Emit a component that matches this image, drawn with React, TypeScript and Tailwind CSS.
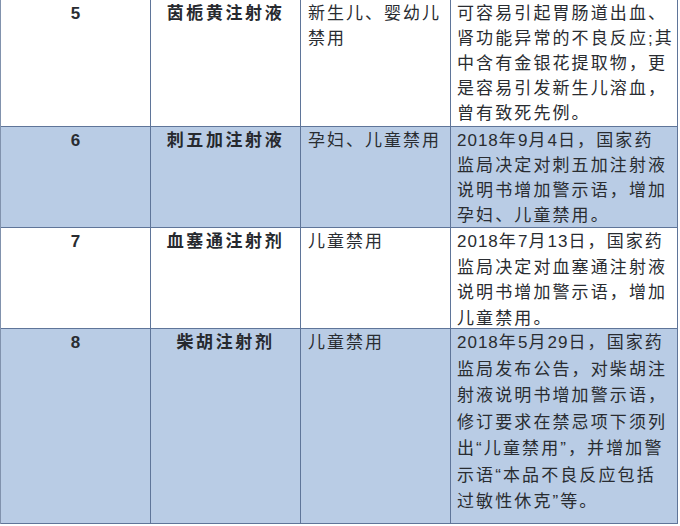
const rows = [
  {
    no: "5",
    name: "茵栀黄注射液",
    ban: ["新生儿、婴幼儿", "禁用"],
    note: [
      "可容易引起胃肠道出血、",
      "肾功能异常的不良反应;其",
      "中含有金银花提取物，更",
      "是容易引发新生儿溶血，",
      "曾有致死先例。",
    ],
    shaded: false,
    height: "h-[127px] leading-[25px]",
  },
  {
    no: "6",
    name: "刺五加注射液",
    ban: ["孕妇、儿童禁用"],
    note: ["2018年9月4日，国家药", "监局决定对刺五加注射液", "说明书增加警示语，增加", "孕妇、儿童禁用。"],
    shaded: true,
    height: "h-[101px] leading-[25px]",
  },
  {
    no: "7",
    name: "血塞通注射剂",
    ban: ["儿童禁用"],
    note: ["2018年7月13日，国家药", "监局决定对血塞通注射液", "说明书增加警示语，增加", "儿童禁用。"],
    shaded: false,
    height: "h-[101px] leading-[25.5px]",
  },
  {
    no: "8",
    name: "柴胡注射剂",
    ban: ["儿童禁用"],
    note: [
      "2018年5月29日，国家药",
      "监局发布公告，对柴胡注",
      "射液说明书增加警示语，",
      "修订要求在禁忌项下须列",
      "出“儿童禁用”，并增加警",
      "示语“本品不良反应包括",
      "过敏性休克”等。",
    ],
    shaded: true,
    height: "h-[195px] leading-[26.5px]",
  },
];

const cell = "border-r border-b border-[#5f7599] pt-[1px] whitespace-nowrap overflow-hidden";

// digits sit tighter than the CJK characters
function Line({ text }: { text: string }) {
  return (
    <div>
      {text.split(/(\d+)/).map((part, i) =>
        /^\d+$/.test(part) ? (
          <span key={i} className="tracking-[1px]">
            {part}
          </span>
        ) : (
          <span key={i}>{part}</span>
        )
      )}
    </div>
  );
}

export default function App() {
  return (
    <div className="w-[680px] h-[526px] bg-white overflow-hidden font-['Liberation_Sans','Noto_Sans_CJK_SC',sans-serif] text-[17px] text-[#292c31]">
      <div className="w-[678px] border-l border-[#8192ad]">
        {rows.map((r) => (
          <div
            key={r.no}
            className={`grid grid-cols-[150px_150px_150px_227px] ${r.height} ${r.shaded ? "bg-[#b9cce5]" : "bg-white"}`}
          >
            <div className={`${cell} text-center font-bold`}>{r.no}</div>
            <div className={`${cell} text-center font-bold tracking-[2.6px] text-[#26292e]`}>{r.name}</div>
            <div className={`${cell} pl-[7px] tracking-[2px]`}>
              {r.ban.map((l) => (
                <div key={l}>{l}</div>
              ))}
            </div>
            <div className={`${cell} pl-[6px] tracking-[2.1px]`}>
              {r.note.map((l) => (
                <Line key={l} text={l} />
              ))}
            </div>
          </div>
        ))}
      </div>
    </div>
  );
}
